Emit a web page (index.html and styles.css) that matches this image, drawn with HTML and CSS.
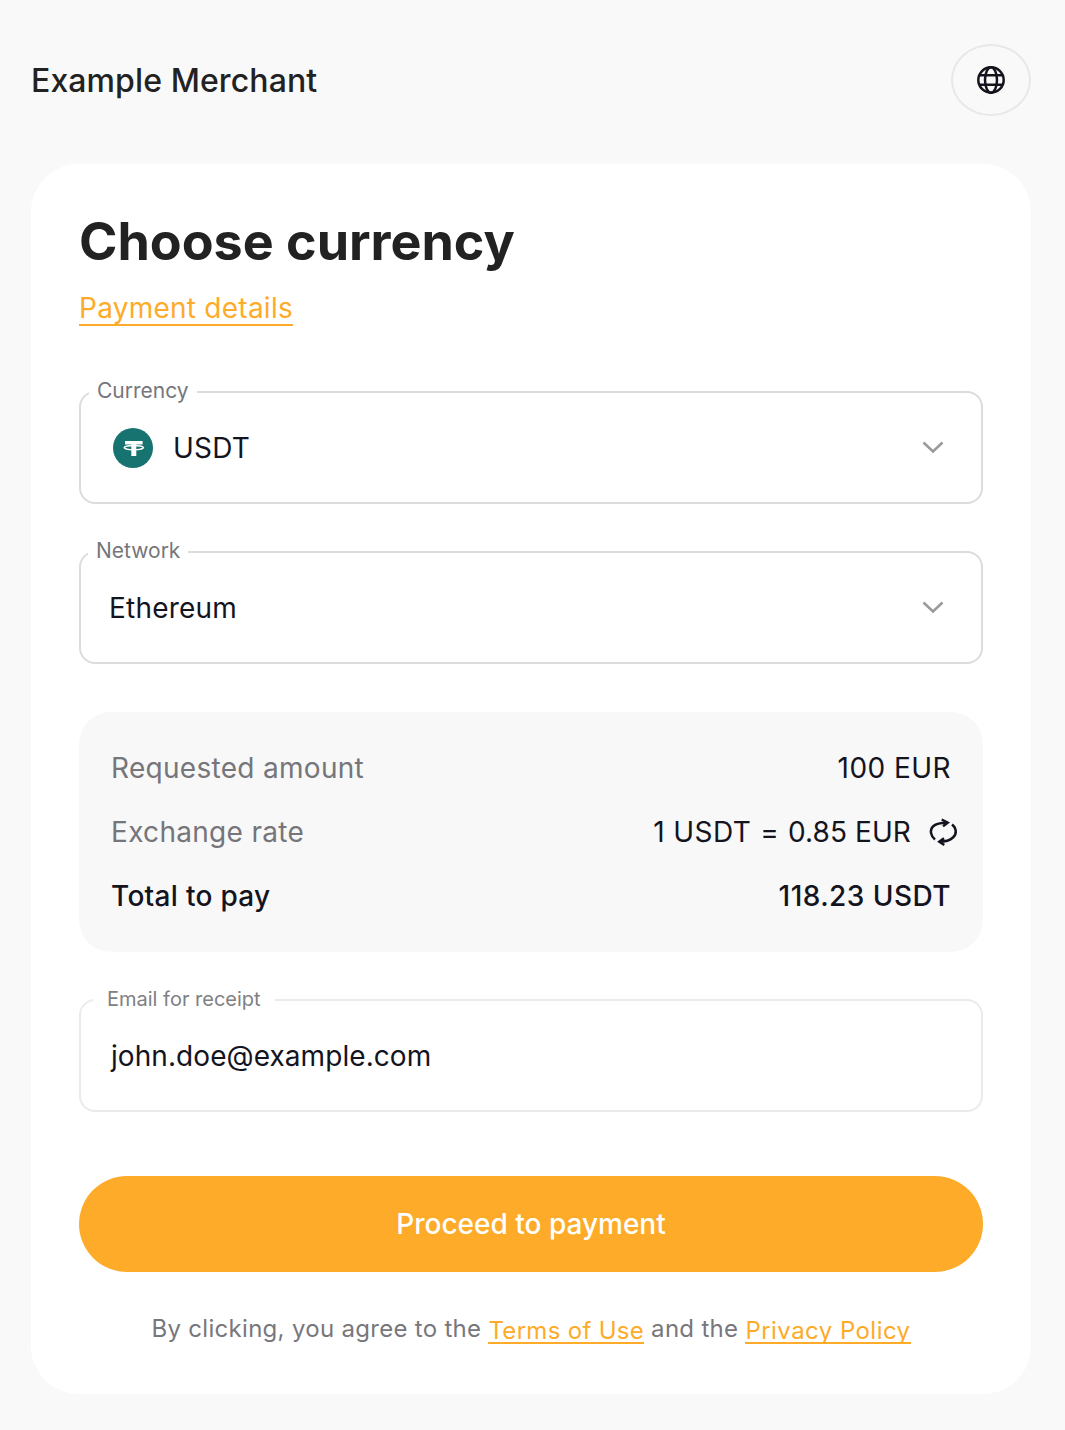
FILE: index.html
```html
<!DOCTYPE html>
<html lang="en">
<head>
  <meta charset="UTF-8">
  <meta name="viewport" content="width=device-width, initial-scale=1.0">
  <title>Choose currency</title>
  <link rel="stylesheet" href="styles.css">
</head>
<body>
  <header class="topbar">
    <span class="merchant">Example Merchant</span>
    <button class="lang-button" aria-label="Language">
      <svg width="30" height="30" viewBox="0 0 30 30" fill="none" stroke="#14141e" stroke-width="2.5">
        <circle cx="15" cy="15" r="12.7"/>
        <ellipse cx="15" cy="15" rx="6" ry="12.7"/>
        <path d="M3 10.2h24M3 19.8h24"/>
      </svg>
    </button>
  </header>

  <main class="card">
    <h1>Choose currency</h1>
    <a class="details-link" href="#">Payment details</a>

    <!-- Currency and network selects -->
    <fieldset class="field field-currency">
      <legend>Currency</legend>
      <div class="field-value">
        <svg class="coin" width="40" height="40" viewBox="0 0 40 40">
          <circle cx="20" cy="20" r="20" fill="#17736f"/>
          <path d="M12 13h17.600v3.600h-6.300V28h-5V16.600H12z" fill="#fff"/>
          <ellipse cx="20.800" cy="19.600" rx="9.600" ry="2.200" fill="none" stroke="#fff" stroke-width="1.500"/>
        </svg>
        <span>USDT</span>
      </div>
      <svg class="chevron" width="24" height="14" viewBox="0 0 24 14" fill="none" stroke="#9a9a9a" stroke-width="2.5"><path d="M2.5 2.5l9.5 9 9.5-9"/></svg>
    </fieldset>

    <fieldset class="field field-network">
      <legend>Network</legend>
      <div class="field-value">
        <span>Ethereum</span>
      </div>
      <svg class="chevron" width="24" height="14" viewBox="0 0 24 14" fill="none" stroke="#9a9a9a" stroke-width="2.5"><path d="M2.5 2.5l9.5 9 9.5-9"/></svg>
    </fieldset>

    <!-- Amount summary -->
    <section class="summary">
      <div class="row">
        <span class="label">Requested amount</span>
        <span class="amount">100 EUR</span>
      </div>
      <div class="row">
        <span class="label">Exchange rate</span>
        <span class="rate">
          <span class="amount">1 USDT</span>
          <span>=</span>
          <span class="rate-value">0.85 EUR</span>
          <svg class="refresh" width="30" height="30" viewBox="0 0 30 30" fill="none" stroke="#14141e" stroke-width="2.5">
            <path d="M7 22.500C3 19.500 1 13 5.500 9 9 5.800 14 5.600 19.700 5.700"/>
            <path d="M13.700 2.500l6 3.200-4.700 3.500"/>
            <path d="M24 7.500c4 3 5.500 9 1 13-3.500 3.300-8.500 4.200-13.700 4.200"/>
            <path d="M16 21.300l-4.700 3.400 5 3.300"/>
          </svg>
        </span>
      </div>
      <div class="row row-total">
        <span class="label-total">Total to pay</span>
        <span class="amount">118.23 USDT</span>
      </div>
    </section>

    <fieldset class="field field-email">
      <legend>Email for receipt</legend>
      <div class="field-value">
        <span>john.doe@example.com</span>
      </div>
    </fieldset>

    <button class="pay-button">Proceed to payment</button>

    <p class="terms">By clicking, you agree to the <a href="#">Terms of Use</a> and the <a class="privacy" href="#">Privacy Policy</a></p>
  </main>
</body>
</html>
```

FILE: styles.css
```css
body {
  margin: 0;
  background-color: #f9f9f9;
  font-family: 'Inter', sans-serif;
  color: #14141e;
}

/* Top bar */
.topbar {
  display: flex;
  justify-content: space-between;
  align-items: center;
  padding: 44px 34px 48px 31px;
}

.merchant {
  font-size: 32px;
  font-weight: 500;
  letter-spacing: 0.1px;
  color: #222222;
}

.lang-button {
  width: 80px;
  height: 72px;
  border-radius: 50%;
  border: 2px solid #e8e8e8;
  background: transparent;
  padding: 0;
  display: flex;
  align-items: center;
  justify-content: center;
}

/* Main card */
.card {
  background-color: #ffffff;
  margin: 0 34px 36px 31px;
  border-radius: 48px;
  padding: 44px 48px 35px 48px;
}

h1 {
  font-size: 52px;
  font-weight: 700;
  line-height: 68px;
  margin: 0;
  color: #222222;
}

.details-link {
  display: inline-block;
  margin-top: 16px;
  font-size: 28px;
  line-height: 32px;
  letter-spacing: 0.25px;
  color: #fdab29;
  text-decoration: none;
  border-bottom: 2px solid #fdab29;
}

/* Outlined fields */
.field {
  position: relative;
  margin: 0;
  padding: 0 30px;
  height: 125px;
  box-sizing: border-box;
  border: 2px solid #dcdcdc;
  border-radius: 16px;
  display: block;
  min-width: 0;
}

.field legend {
  font-size: 21px;
  color: #76767a;
  padding: 0 8px 2px;
  line-height: 24px;
}

.field-currency {
  margin-top: 53px;
  padding-left: 32px;
}

.field-currency legend {
  margin-left: -24px;
}

.field-network {
  margin-top: 35px;
  padding-left: 28px;
}

.field-network legend {
  margin-left: -21px;
}

.field-email {
  margin-top: 35px;
  border-color: #ebebeb;
  letter-spacing: 0;
}

.field-email legend {
  font-size: 20px;
  padding: 0 14px 2px;
  margin-left: -18px;
  color: #808084;
}

.field-value {
  display: flex;
  align-items: center;
  gap: 20px;
  font-size: 28px;
  letter-spacing: 0.2px;
  height: 86px;
}

.field-email .field-value {
  letter-spacing: 0.07px;
}

.chevron {
  position: absolute;
  right: 36px;
  top: 35px;
}

/* Summary block */
.summary {
  margin-top: 48px;
  background-color: #f8f8f8;
  border-radius: 32px;
  padding: 36px 32px;
  display: flex;
  flex-direction: column;
  gap: 24px;
  font-size: 28px;
  line-height: 40px;
}

.row {
  display: flex;
  justify-content: space-between;
  align-items: center;
  height: 40px;
}

.label {
  color: #75757a;
  letter-spacing: 0.3px;
}

.amount {
  letter-spacing: 0.45px;
}

.row-total {
  font-weight: 500;
}

.label-total {
  letter-spacing: 0.3px;
}

.rate {
  display: flex;
  align-items: center;
  gap: 9px;
}

.rate-value {
  letter-spacing: 0.1px;
}

.refresh {
  margin-left: 8px;
  margin-right: -7px;
}

.pay-button {
  display: block;
  width: 100%;
  height: 96px;
  margin-top: 64px;
  border: none;
  border-radius: 48px;
  background-color: #fdab29;
  color: #ffffff;
  font-family: 'Inter', sans-serif;
  font-size: 28px;
  font-weight: 500;
}

.terms {
  margin: 27px 0 0 0;
  text-align: center;
  font-size: 24px;
  letter-spacing: 0.3px;
  line-height: 60px;
  color: #77777c;
}

.terms a {
  display: inline-block;
  line-height: 23px;
  vertical-align: -2px;
  color: #fdab29;
  text-decoration: none;
  border-bottom: 2px solid #fdab29;
}

.terms .privacy {
  letter-spacing: 0.45px;
}
```
